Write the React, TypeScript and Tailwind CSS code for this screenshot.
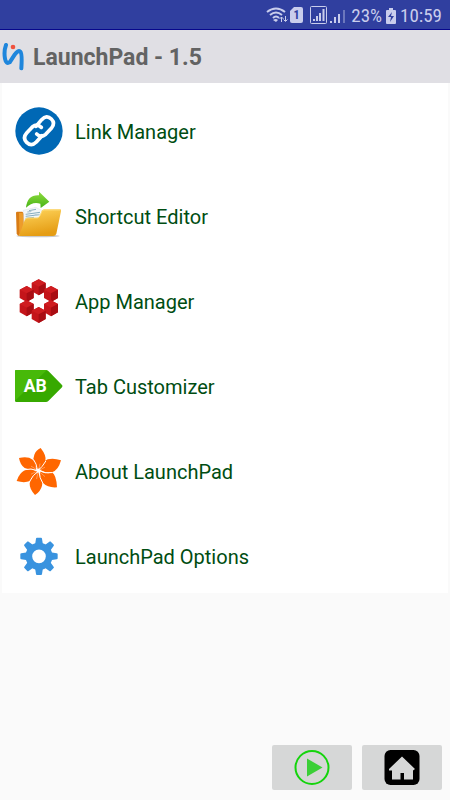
import type { ReactNode } from "react";

type MenuItem = {
   id: string;
   label: string;
   icon: ReactNode;
};

function Icon({ children }: { children: ReactNode }) {
   return (
      <svg viewBox="21 21 144 144" className="size-12 shrink-0" aria-hidden="true">
         {children}
      </svg>
   );
}

function LinkIcon() {
   return (
      <Icon>
         <circle cx="93" cy="93" r="71" fill="#0068b5" />
         <g fill="none" stroke="#fff" strokeWidth="11" strokeLinecap="round" strokeLinejoin="round">
            <path d="M84 79L101 59Q116 43 130 57Q143 70 130 85L113 103Q99 115 86 102" />
            <path d="M102 107L85 126Q70 141 56 127Q43 114 56 99L73 81Q87 69 100 82" />
         </g>
      </Icon>
   );
}

function FolderIcon() {
   return (
      <Icon>
         <defs>
            <linearGradient id="folder" x1="0" y1="0" x2="0.3" y2="1">
               <stop offset="0" stopColor="#ffd65e" />
               <stop offset="1" stopColor="#e59d14" />
            </linearGradient>
            <linearGradient id="arrow" x1="0" y1="0" x2="0" y2="1">
               <stop offset="0" stopColor="#8fdc40" />
               <stop offset="1" stopColor="#46b314" />
            </linearGradient>
         </defs>
         <ellipse cx="90" cy="153" rx="65" ry="4" fill="#c9c9c9" />
         <path d="M24 84Q24 80 28 80H43L52 91V110L33 153Q27 152 26 145Z" fill="#d97c15" />
         <path d="M33 84H44L54 148H34Z" fill="#ed9c2b" />
         <path d="M46 76L83 67L112 81L110 112L48 119Z" fill="#f3f6f8" stroke="#ccd4da" strokeWidth="1" />
         <path d="M63 77L84 73M53 88L96 82M53 94L94 89M53 100L78 97" stroke="#88aebf" strokeWidth="3" />
         <path d="M58 81L70 79M80 90L94 88" stroke="#b5cbd5" strokeWidth="4" />
         <path d="M33 153L51 103Q53 98 60 98H87Q92 98 95 92L101 78Q103 73 109 73H157Q160 73 159 79L145 146Q143 153 135 153Z" fill="url(#folder)" />
         <path d="M52 104Q54 99 60 99H88Q93 98 96 92L102 79Q104 75 109 75H157" fill="none" stroke="#ffe48c" strokeWidth="2" />
         <path d="M54 68Q58 29 93 31V20L124 50L98 69L97 56Q74 48 54 68Z" fill="url(#arrow)" />
      </Icon>
   );
}

const CUBES = [
   [92, 52],
   [56, 72],
   [129, 72],
   [56, 115],
   [129, 115],
   [92, 135],
];

function CubesIcon() {
   return (
      <Icon>
         {CUBES.map(([x, y]) => (
            <g key={`${x}-${y}`} transform={`translate(${x} ${y})`}>
               <path d="M0-24L21-13V12L0 24L-21 12V-13Z" fill="#c4151a" />
               <path d="M0-24L21-13L0-2L-21-13Z" fill="#cf1c20" />
               <path d="M0-2L21-13V12L0 24Z" fill="#a90d13" />
            </g>
         ))}
      </Icon>
   );
}

function TagIcon() {
   return (
      <Icon>
         <path d="M25 45H114Q118 45 121 48L162 90Q165 93 162 97L121 138Q118 141 114 141H25Q21 141 21 137V49Q21 45 25 45Z" fill="#37a900" />
         <path d="M25 45H114L116 46L21 137V49Q21 45 25 45Z" fill="#47b909" />
         <text x="82" y="112" textAnchor="middle" fontSize="53" fontWeight="700" fill="#fff">
            AB
         </text>
      </Icon>
   );
}

function FlowerIcon() {
   return (
      <Icon>
         <g fill="#ff6600">
            <path d="M89 88Q70 68 79 44Q84 31 98 24Q116 47 112 62Q109 76 89 88Z" />
            <path d="M94 88Q101 66 119 58Q137 53 159 61Q151 91 132 97Q115 102 94 88Z" />
            <path d="M96 94Q120 104 132 97Q145 105 147 142Q119 144 106 130Q96 119 96 94Z" />
            <path d="M91 96Q106 120 102 137Q98 154 81 165Q64 147 65 130Q67 112 91 96Z" />
            <path d="M87 94Q84 113 66 123Q49 130 26 123Q34 99 50 91Q65 84 87 94Z" />
            <path d="M85 89Q62 90 50 84Q37 76 33 54Q60 48 74 59Q81 66 85 89Z" />
         </g>
         <g fill="none" stroke="#fff" strokeWidth="3" strokeLinecap="round">
            <path d="M91 91Q103 81 113 64" />
            <path d="M92 92Q111 102 132 98" />
            <path d="M92 93Q95 116 104 129" />
            <path d="M90 94Q74 105 65 124" />
            <path d="M88 92Q69 83 50 89" />
            <path d="M88 89Q86 71 77 59" />
            <path d="M92 89L96 72M94 91L110 82M94 95L110 109M90 97L86 116M86 94L70 102M86 89L70 79" strokeWidth="1" />
         </g>
      </Icon>
   );
}

const TEETH = [0, 45, 90, 135, 180, 225, 270, 315];

function GearIcon() {
   return (
      <Icon>
         <g fill="#3993df">
            {TEETH.map((a) => (
               <path key={a} d="M81 60L84 41Q84 38 87 38H99Q102 38 102 41L105 60Z" transform={`rotate(${a} 93 94)`} />
            ))}
         </g>
         <circle cx="93" cy="94" r="30.500" fill="none" stroke="#3993df" strokeWidth="20" />
      </Icon>
   );
}

const MENU: MenuItem[] = [
   { id: "links", label: "Link Manager", icon: <LinkIcon /> },
   { id: "shortcuts", label: "Shortcut Editor", icon: <FolderIcon /> },
   { id: "apps", label: "App Manager", icon: <CubesIcon /> },
   { id: "tabs", label: "Tab Customizer", icon: <TagIcon /> },
   { id: "about", label: "About LaunchPad", icon: <FlowerIcon /> },
   { id: "options", label: "LaunchPad Options", icon: <GearIcon /> },
];

function StatusBar() {
   return (
      <div className="flex h-[30px] items-center justify-end border-b border-[#07078c] bg-[#303f9f] pt-0.5 pr-2 font-['Roboto_Condensed',Roboto,sans-serif] text-[19px] leading-6 text-[#c9cdec]">
         <svg viewBox="0 0 84 24" className="mr-1 h-6 w-[84px]" fill="none" stroke="currentColor" aria-hidden="true">
            <path d="M4 8Q13 1 22 8M7 11Q13 6 19 11M10 14Q13 11 16 14" strokeWidth="2" />
            <path d="M10 16Q13 14 15 16L13 18Z" fill="currentColor" stroke="none" />
            <path d="M18.500 18V13M16.500 15L18.500 13L20.500 15M22.500 12V17M20.500 15.500L22.500 17.500L24.500 15.500" />
            <path d="M31 3H38Q40 3 40 5V17Q40 19 38 19H29Q27 19 27 17V7Z" fill="currentColor" stroke="none" />
            <text x="33.500" y="15" textAnchor="middle" fontSize="12" fontWeight="700" fill="#303f9f" stroke="none">
               1
            </text>
            <rect x="47.500" y="2.500" width="16" height="17" rx="1" />
            <path d="M51 17V15M54 17V12M57 17V9M60.500 17V5" strokeWidth="2" />
            <path d="M68 19V17M72 19V13M76 19V10" strokeWidth="2" />
            <path d="M81 19V6" strokeWidth="2" opacity="0.4" />
         </svg>
         <span>23%</span>
         <svg viewBox="0 0 12 18" className="mx-[3px] h-[18px] w-3" aria-hidden="true">
            <path d="M4 1H8V3H10Q11 3 11 4V16Q11 17 10 17H2Q1 17 1 16V4Q1 3 2 3H4Z" fill="currentColor" />
            <path d="M7 5L3 10H6L5 15L9 9H6Z" fill="#303f9f" />
         </svg>
         <span>10:59</span>
      </div>
   );
}

function Logo() {
   return (
      <svg viewBox="0 0 72 90" className="h-[30px] w-6" aria-hidden="true">
         <path d="M18 9Q11 28 15 50Q18 67 29 61L44 38Q54 23 61 29Q67 35 64 79" fill="none" stroke="#1f86dc" strokeWidth="12" strokeLinecap="round" strokeLinejoin="round" />
         <circle cx="39" cy="15" r="7" fill="#f0523f" />
      </svg>
   );
}

export default function App() {
   return (
      <div className="flex min-h-screen flex-col bg-[#fafafa] font-[Roboto,sans-serif]">
         <StatusBar />
         <header className="flex h-[53px] items-center gap-[9px] bg-[#e0dfe4]">
            <Logo />
            <h1 className="pt-[3px] text-[23px] leading-7 font-bold text-[#636363]">LaunchPad - 1.5</h1>
         </header>

         <nav className="mx-0.5 bg-white">
            <ul>
               {MENU.map((item) => (
                  <li key={item.id}>
                     <button type="button" className="flex w-full items-center gap-3 px-[13px] pt-6 pb-[13px] text-left">
                        {item.icon}
                        <span className="pt-0.5 text-[20px] leading-6 text-[#004d12]">{item.label}</span>
                     </button>
                  </li>
               ))}
            </ul>
         </nav>

         <footer className="mt-auto flex justify-end gap-2.5 pr-2 pb-2.5">
            <button type="button" aria-label="Play" className="grid h-[45px] w-20 place-items-center rounded-xs bg-[#d6d7d7]">
               <svg viewBox="0 0 36 36" className="size-9" aria-hidden="true">
                  <circle cx="18" cy="17.500" r="16.500" fill="none" stroke="#14d40c" strokeWidth="2" />
                  <path d="M13 8.500L28.500 17.500L13 26.500Z" fill="#3bcf37" />
               </svg>
            </button>
            <button type="button" aria-label="Home" className="grid h-[45px] w-20 place-items-center rounded-xs bg-[#d6d7d7]">
               <svg viewBox="0 0 36 36" className="size-9" aria-hidden="true">
                  <rect width="35" height="35" x="0.500" rx="6" fill="#000" />
                  <path d="M18 6.500L31 19L29 20.500V29.500H20V23H16.500V29.500H8V20.500H5V19Z" fill="#d6d7d7" />
               </svg>
            </button>
         </footer>
      </div>
   );
}
